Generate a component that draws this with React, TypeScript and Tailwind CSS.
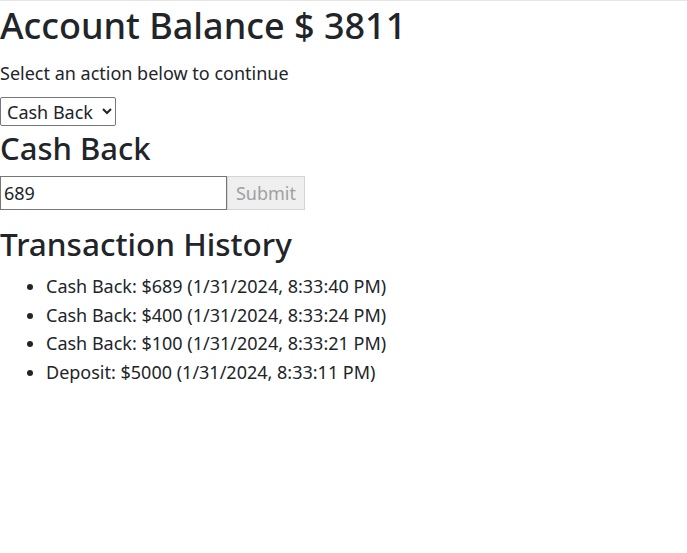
export default function App() {
  const history = [
    "Cash Back: $689 (1/31/2024, 8:33:40 PM)",
    "Cash Back: $400 (1/31/2024, 8:33:24 PM)",
    "Cash Back: $100 (1/31/2024, 8:33:21 PM)",
    "Deposit: $5000 (1/31/2024, 8:33:11 PM)",
  ];
  return (
    <main
      className="min-h-screen bg-white border-t border-[#e6e6e6] text-[#212529]"
      style={{ fontFamily: '"Noto Sans", sans-serif' }}
    >
      <h1 className="text-[36px] leading-[49px] font-medium mb-[10px]">Account Balance $ 3811</h1>
      <p className="text-[18px] leading-[27px] mb-[10px]">Select an action below to continue</p>
      <select className="w-[116px] text-[18px] h-[29px] border border-[#767676] rounded-[2px] px-0.5">
        <option>Cash Back</option>
      </select>
      <h2 className="text-[31px] leading-[44px] font-medium mb-[6px]">Cash Back</h2>
      <form className="flex mb-[15px]">
        <input
          defaultValue="689"
          className="w-[227px] h-[34px] border border-[#767676] px-[3px] text-[18px]"
        />
        <button
          type="button"
          disabled
          className="w-[78px] h-[34px] text-[18px] text-[#a0a0a0] bg-[#efefef] border border-[#d4d4d4]"
        >
          Submit
        </button>
      </form>
      <h2 className="text-[31.5px] leading-[38px] font-medium mb-[9px]">Transaction History</h2>
      <ul className="list-disc pl-[46px]">
        {history.map((h) => (
          <li key={h} className="text-[18px] leading-[28.5px]">
            {h}
          </li>
        ))}
      </ul>
    </main>
  );
}
